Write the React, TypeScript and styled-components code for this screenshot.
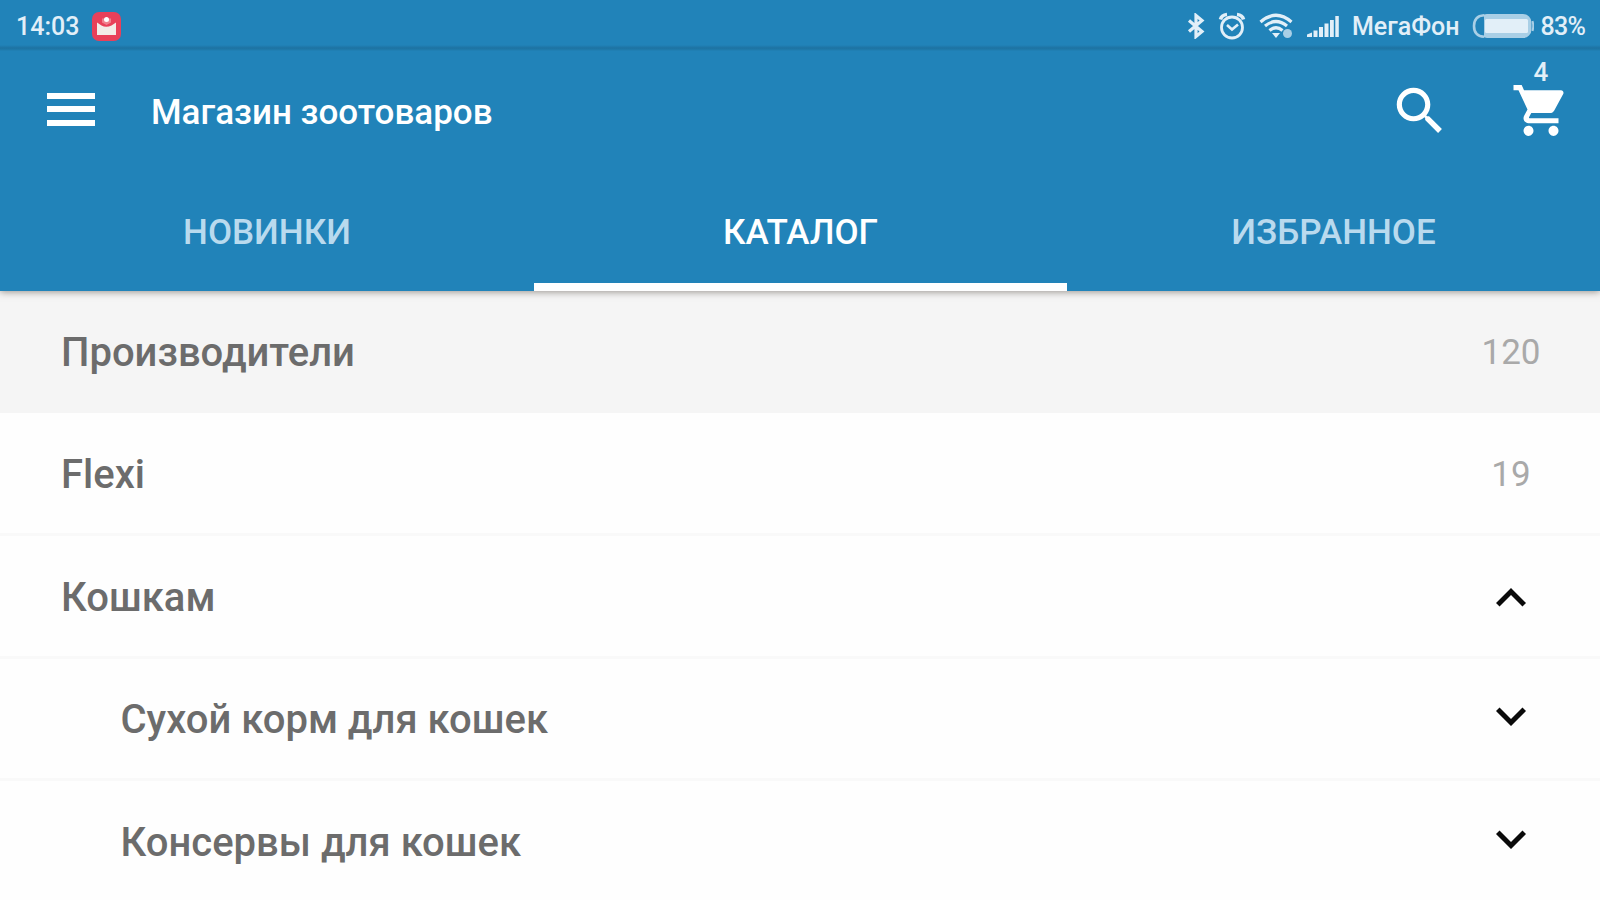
import React from "react";
import styled, { createGlobalStyle } from "styled-components";

const GlobalStyle = createGlobalStyle`
  * { box-sizing: border-box; }
  body {
    margin: 0;
    font-family: Roboto, "Liberation Sans", sans-serif;
    background: #fefefe;
    overflow: hidden;
  }
  svg { display: block; flex: none; }
`;

const Screen = styled.div`
  width: 1600px;
  height: 900px;
  overflow: hidden;
  display: flex;
  flex-direction: column;
  background: #fefefe;
`;

const Header = styled.header`
  height: 291px;
  flex: none;
  display: flex;
  flex-direction: column;
  background: #2183b9;
  box-shadow: 0 1px 7px rgba(60, 50, 40, 0.5);
  z-index: 1;
`;

const StatusBar = styled.div`
  height: 51px;
  flex: none;
  display: flex;
  align-items: center;
  justify-content: space-between;
  padding: 1px 15px 0 16px;
  color: #e2eff8;
  background: linear-gradient(#2183b9 45px, #1d72a2 48px, #1f7bad 50px, #2183b9 51px);
`;

const StatusGroup = styled.div`
  display: flex;
  align-items: center;
`;

const StatusText = styled.span<{ $spacing?: number; $left?: number }>`
  font-size: 25px;
  line-height: 30px;
  font-weight: 500;
  white-space: nowrap;
  padding-top: 1px;
  letter-spacing: ${(p) => p.$spacing ?? 0}px;
  margin-left: ${(p) => p.$left ?? 0}px;
`;

const StatusIcon = styled.svg<{ $left?: number }>`
  margin-left: ${(p) => p.$left ?? 0}px;
`;

const Toolbar = styled.div`
  height: 119px;
  flex: none;
  display: flex;
  align-items: center;
  padding: 0 29px 0 47px;
  color: #fff;
`;

const MenuButton = styled.div`
  width: 48px;
  height: 33px;
  margin-bottom: 3px;
  display: flex;
  flex-direction: column;
  justify-content: space-between;
`;

const MenuBar = styled.span`
  height: 6px;
  background: #fff;
`;

const Title = styled.h1`
  margin: 4px 0 0 56px;
  flex: 1;
  font-size: 35px;
  line-height: 44px;
  font-weight: 500;
  white-space: nowrap;
`;

const CartButton = styled.div`
  position: relative;
  margin-left: 60px;
`;

const Badge = styled.span`
  position: absolute;
  left: 2px;
  top: -23px;
  width: 56px;
  text-align: center;
  font-size: 26px;
  line-height: 30px;
  font-weight: 500;
  color: #e2eff8;
`;

const Tabs = styled.nav`
  flex: 1;
  display: grid;
  grid-template-columns: 534px 533px 533px;
`;

const Tab = styled.div<{ $active?: boolean }>`
  display: flex;
  justify-content: center;
  padding-top: 41px;
  font-size: 35px;
  line-height: 44px;
  font-weight: 500;
  color: ${(p) => (p.$active ? "#fff" : "#b9daee")};
  border-bottom: 8px solid ${(p) => (p.$active ? "#fff" : "transparent")};
`;

const List = styled.main`
  display: flex;
  flex-direction: column;
`;

const Row = styled.div<{ $shaded?: boolean; $nested?: boolean }>`
  height: ${(p) => (p.$shaded ? 122 : 122.8)}px;
  flex: none;
  display: flex;
  align-items: center;
  justify-content: space-between;
  padding-left: ${(p) => (p.$nested ? 120.5 : 61)}px;
  padding-bottom: ${(p) => (p.$shaded ? 0 : 1)}px;
  background: ${(p) => (p.$shaded ? "#f5f5f5" : "#fefefe")};
  box-shadow: inset 0 -3px 0 ${(p) => (p.$shaded ? "#f5f5f5" : "#f9f9f9")};
`;

const Label = styled.span`
  padding-top: 2px;
  font-size: 40px;
  line-height: 48px;
  font-weight: 500;
  color: #6c6c6c;
  white-space: nowrap;
`;

const Trailing = styled.span`
  width: 178px;
  display: flex;
  justify-content: center;
`;

const Count = styled.span`
  padding-top: 2px;
  font-size: 35px;
  line-height: 44px;
  color: #a9a9a9;
`;

const MailIcon = () => (
  <StatusIcon $left={13} width="29" height="29" viewBox="0 0 29 29">
    <rect width="29" height="29" rx="7" fill="#e9405a" />
    <path d="M5 10.5L9.5 13.5Q14 16 19.500 13.500L24 10.500V23H5Z" fill="#f3ece9" />
    <path d="M10 6.500h3v2h3v-2h3v4l-4.500 2.500-4.500-2.500Z" fill="#f0808e" />
    <circle cx="14.500" cy="7.500" r="2.500" fill="#fff" />
  </StatusIcon>
);

const BluetoothIcon = () => (
  <StatusIcon width="18" height="26" viewBox="0 0 18 26" fill="none" stroke="currentColor" strokeWidth="3.200">
    <path d="M2 7.500L15 18.500L9 23.500V2.500L15 7.500L2 18.500" />
  </StatusIcon>
);

const AlarmIcon = () => (
  <StatusIcon $left={13} width="28" height="28" viewBox="0 0 28 28" fill="none" stroke="currentColor">
    <circle cx="14" cy="15.500" r="10.500" strokeWidth="2.800" />
    <path d="M9 13l5 4.500 6-5" strokeWidth="2.600" />
    <path d="M2.500 7.500Q3.500 3 9 2.500M25.500 7.500Q24.500 3 19 2.500" strokeWidth="3.600" />
  </StatusIcon>
);

const WifiIcon = () => (
  <StatusIcon $left={13} width="34" height="26" viewBox="0 0 34 26" fill="none" stroke="currentColor" strokeWidth="3.200">
    <path d="M1.500 9Q17 -4.500 32.500 9" />
    <path d="M6 13Q17 4 28 13" />
    <path d="M10.500 17.500Q17 12 23.500 17.500" />
    <path d="M13 20h8L17 25Z" fill="currentColor" stroke="none" />
    <circle cx="28.500" cy="20.500" r="4.500" fill="#a9cfe6" stroke="none" />
  </StatusIcon>
);

const SignalIcon = () => (
  <StatusIcon $left={14} width="32" height="24" viewBox="0 0 32 24" fill="currentColor">
    <path d="M0 23V20.500L5 18.500V23ZM6.500 23V16.500h4v6.500ZM12 23V13h4v10ZM17.500 23V9.500h4V23ZM23 23V6h3.800v17ZM28.300 23V2h3.500v21Z" />
  </StatusIcon>
);

const BatteryIcon = () => (
  <StatusIcon $left={12} width="62" height="26" viewBox="0 0 62 26">
    <rect x="8" y="2.500" width="50" height="21" rx="7" fill="#a9cfe6" stroke="#a9cfe6" strokeWidth="3" />
    <path d="M12 2.200Q2 3 2 13T12 23.800" fill="#2183b9" stroke="#a9cfe6" strokeWidth="2.600" />
    <path d="M60.500 8q1.500 5 0 10" fill="none" stroke="#a9cfe6" strokeWidth="2" />
    <rect x="13" y="6" width="43" height="14" rx="1.500" fill="#e2eff8" />
  </StatusIcon>
);

const SearchIcon = () => (
  <svg width="62" height="62" viewBox="0 0 24 24" fill="#fff">
    <path d="M15.500 14h-.79l-.28-.27C15.410 12.590 16 11.110 16 9.500 16 5.910 13.090 3 9.500 3S3 5.910 3 9.500 5.910 16 9.500 16c1.610 0 3.090-.59 4.230-1.570l.27.28v.79l5 4.990L20.490 19l-4.990-5zm-6 0C7.010 14 5 11.990 5 9.500S7.010 5 9.500 5 14 7.010 14 9.500 11.990 14 9.500 14z" />
  </svg>
);

const CartIcon = () => (
  <svg width="60" height="61" viewBox="0 0 24 24" preserveAspectRatio="none" fill="#fff">
    <path d="M7 18c-1.100 0-1.990.9-1.990 2S5.900 22 7 22s2-.9 2-2-.9-2-2-2zM1 2v2h2l3.600 7.590-1.350 2.450c-.16.28-.25.61-.25.96 0 1.100.9 2 2 2h12v-2H7.420c-.14 0-.25-.11-.25-.25l.03-.12.9-1.630h7.450c.75 0 1.410-.41 1.750-1.030l3.580-6.490c.08-.14.12-.31.12-.48 0-.55-.45-1-1-1H5.210l-.94-2H1zm16 16c-1.100 0-1.990.9-1.990 2s.89 2 1.990 2 2-.9 2-2-.9-2-2-2z" />
  </svg>
);

const ChevronSvg = styled.svg<{ $up?: boolean }>`
  margin-top: ${(p) => (p.$up ? 2 : 0)}px;
  margin-bottom: ${(p) => (p.$up ? 0 : 6)}px;
  margin-right: 1px;
`;

const Chevron = ({ up }: { up?: boolean }) => (
  <ChevronSvg $up={up} width="60" height="60" viewBox="0 0 24 24" fill="#0a0a0a">
    <path
      d={
        up
          ? "M12 8l-6 6 1.410 1.410L12 10.830l4.590 4.580L18 14z"
          : "M16.590 8.590L12 13.170 7.410 8.590 6 10l6 6 6-6z"
      }
    />
  </ChevronSvg>
);

const rows = [
  { label: "Производители", trailing: <Count>120</Count>, shaded: true },
  { label: "Flexi", trailing: <Count>19</Count> },
  { label: "Кошкам", trailing: <Chevron up /> },
  { label: "Сухой корм для кошек", trailing: <Chevron />, nested: true },
  { label: "Консервы для кошек", trailing: <Chevron />, nested: true },
];

export default function App() {
  return (
    <Screen>
      <GlobalStyle />
      <Header>
        <StatusBar>
          <StatusGroup>
            <StatusText>14:03</StatusText>
            <MailIcon />
          </StatusGroup>
          <StatusGroup>
            <BluetoothIcon />
            <AlarmIcon />
            <WifiIcon />
            <SignalIcon />
            <StatusText $left={13}>МегаФон</StatusText>
            <BatteryIcon />
            <StatusText $left={7} $spacing={-0.8}>83%</StatusText>
          </StatusGroup>
        </StatusBar>
        <Toolbar>
          <MenuButton>
            <MenuBar />
            <MenuBar />
            <MenuBar />
          </MenuButton>
          <Title>Магазин зоотоваров</Title>
          <SearchIcon />
          <CartButton>
            <CartIcon />
            <Badge>4</Badge>
          </CartButton>
        </Toolbar>
        <Tabs>
          <Tab>НОВИНКИ</Tab>
          <Tab $active>КАТАЛОГ</Tab>
          <Tab>ИЗБРАННОЕ</Tab>
        </Tabs>
      </Header>
      <List>
        {rows.map((row) => (
          <Row key={row.label} $shaded={row.shaded} $nested={row.nested}>
            <Label>{row.label}</Label>
            <Trailing>{row.trailing}</Trailing>
          </Row>
        ))}
      </List>
    </Screen>
  );
}
